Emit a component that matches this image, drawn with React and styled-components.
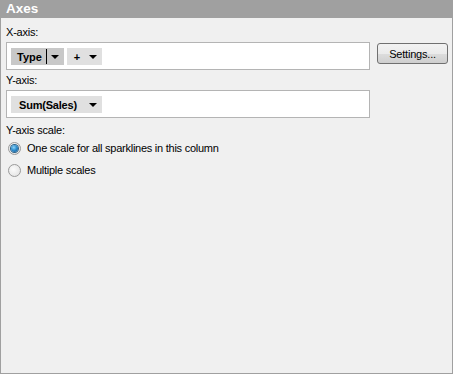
import React from "react";
import styled, { createGlobalStyle } from "styled-components";

const GlobalStyle = createGlobalStyle`
  html, body {
    margin: 0;
    padding: 0;
    background: #f0f0f0;
  }
  body {
    font-family: "Liberation Sans", Arial, sans-serif;
    font-size: 11px;
    color: #000;
  }
`;

const Panel = styled.div`
  width: 453px;
  height: 374px;
  box-sizing: border-box;
  border: 1px solid #a0a0a0;
  border-top: none;
  background: #f0f0f0;
  display: flex;
  flex-direction: column;
`;

const Header = styled.div`
  height: 18px;
  margin: 0 -1px;
  background: #a0a0a0;
  color: #fff;
  font-size: 13.5px;
  font-weight: bold;
  line-height: 18px;
  padding-left: 6px;
`;

const Body = styled.div`
  padding: 7px 4px 0 5px;
  display: flex;
  flex-direction: column;
`;

const Label = styled.div`
  line-height: 14px;
  letter-spacing: -0.2px;
  margin-top: ${props => props.gap || 0}px;
  margin-bottom: ${props => (props.tight ? 0 : 3)}px;
`;

const Row = styled.div`
  display: flex;
  align-items: flex-start;
  gap: 7px;
`;

const AxisBox = styled.div`
  box-sizing: border-box;
  width: 364px;
  height: 28px;
  border: 1px solid #b4b4b4;
  background: #fff;
  display: flex;
  align-items: center;
  gap: 3px;
  padding: 1px 0 0 4px;
`;

const Chip = styled.div`
  height: 17px;
  display: flex;
  align-items: center;
  background: ${props => (props.dark ? "#c8c8c8" : "#e0e0e0")};
  font-weight: bold;
  font-size: 11px;
  letter-spacing: ${props => props.tracking || 0}px;
  padding: 0 5px 0 ${props => props.pad || 6}px;
  gap: ${props => props.space || 6}px;
`;

const Separator = styled.span`
  width: 1px;
  height: 15px;
  background: #000;
  margin: 0 -1px 0 -1px;
`;

const Arrow = styled.span`
  width: 0;
  height: 0;
  border-left: 4px solid transparent;
  border-right: 4px solid transparent;
  border-top: 4px solid #000;
  margin-top: 1px;
`;

const Button = styled.button`
  margin-top: 1px;
  width: 71px;
  height: 21px;
  box-sizing: border-box;
  border: 1px solid #707070;
  border-radius: 3px;
  background: linear-gradient(#f2f2f2 0%, #ebebeb 50%, #dddddd 51%, #cfcfcf 100%);
  font-family: "Liberation Sans", Arial, sans-serif;
  font-size: 11px;
  letter-spacing: -0.2px;
  color: #000;
  padding: 0;
`;

const RadioRow = styled.label`
  display: flex;
  align-items: center;
  gap: 6px;
  height: 22px;
  padding-left: 2px;
  letter-spacing: -0.25px;
`;

const RadioCircle = styled.span`
  width: 13px;
  height: 13px;
  box-sizing: border-box;
  border-radius: 50%;
  border: 1px solid #9a9a9a;
  background: radial-gradient(circle at 40% 40%, #fbfbfb 0%, #dedede 100%);
  display: flex;
  align-items: center;
  justify-content: center;
`;

const RadioDot = styled.span`
  width: 7px;
  height: 7px;
  border-radius: 50%;
  background: radial-gradient(circle at 40% 35%, #8fd4f7 0%, #2f8fd0 45%, #0d4f88 100%);
  box-shadow: 0 0 0 1px #2c6288;
`;

const Radio = ({ checked, children }) => (
  <RadioRow>
    <RadioCircle>{checked && <RadioDot />}</RadioCircle>
    <span>{children}</span>
  </RadioRow>
);

const App = () => (
  <>
    <GlobalStyle />
    <Panel>
      <Header>Axes</Header>
      <Body>
        <Label>X-axis:</Label>
        <Row>
          <AxisBox>
            <Chip dark space={5}>
              Type
              <Separator />
              <Arrow />
            </Chip>
            <Chip pad={7} space={9}>
              +
              <Arrow />
            </Chip>
          </AxisBox>
          <Button>Settings...</Button>
        </Row>
        <Label gap={3}>Y-axis:</Label>
        <Row>
          <AxisBox>
            <Chip pad={8} space={12} tracking={-0.2}>
              Sum(Sales)
              <Arrow />
            </Chip>
          </AxisBox>
        </Row>
        <Label gap={5} tight>Y-axis scale:</Label>
        <Radio checked>One scale for all sparklines in this column</Radio>
        <Radio>Multiple scales</Radio>
      </Body>
    </Panel>
  </>
);

export default App;
